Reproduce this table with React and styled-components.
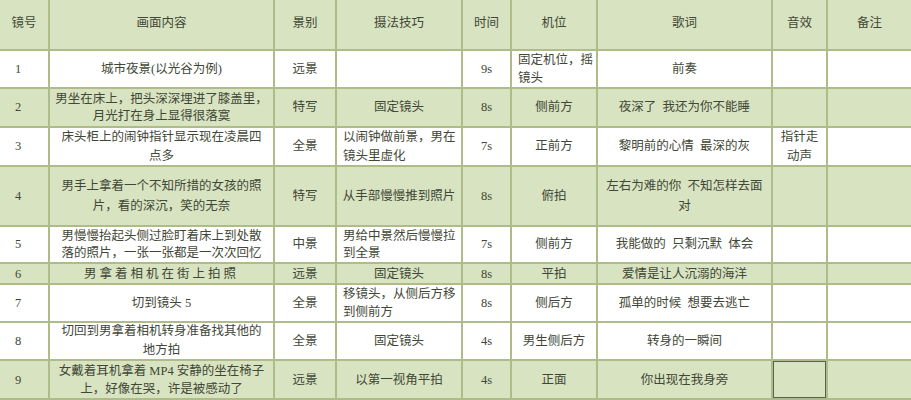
import styled, { createGlobalStyle } from "styled-components";

const GlobalStyle = createGlobalStyle`
  body {
    margin: 0;
    background: #fff;
    font-family: "Liberation Serif", "Noto Sans CJK SC", serif;
  }
`;

const line = "#afbc87";
const green = "#d8e3c1";

const Sheet = styled.div`
  display: grid;
  grid-template-columns: 50px 225px 62px 126px 49px 86px 175px 55px 1fr;
  grid-template-rows: 51px 38px 39px 39px 60px 37px 21px 38px 38px 39px;
  width: 911px;
  height: 400px;
  overflow: hidden;
  color: #414736;
`;

const Cell = styled.div`
  box-sizing: border-box;
  display: flex;
  align-items: center;
  justify-content: ${(p) => (p.$align === "left" ? "flex-start" : "center")};
  text-align: ${(p) => (p.$align === "left" ? "left" : "center")};
  padding: ${(p) => (p.$num ? "0 0 0 15px" : "0 6px")};
  background: ${(p) => (p.$shade ? green : "#fff")};
  border-right: 2px solid ${line};
  border-bottom: 2px solid ${line};
  font-size: 12.5px;
  line-height: ${(p) => p.$lh || 18}px;
  letter-spacing: ${(p) => p.$spread || 0}px;
  white-space: pre;
  overflow: hidden;
  box-shadow: ${(p) => (p.$boxed ? "inset 0 0 0 1px #5c5f52" : "none")};

  &:nth-child(9n) {
    border-right: none;
  }
`;

const HeadCell = styled(Cell)`
  background: ${green};
  padding-bottom: 4px;
`;

const headers = ["镜号", "画面内容", "景别", "摄法技巧", "时间", "机位", "歌词", "音效", "备注"];

const rows = [
  {
    lh: 18,
    cells: ["1", "城市夜景(以光谷为例)", "远景", "", "9s", { t: "固定机位，摇\n镜头", left: true }, "前奏", "", ""],
  },
  {
    shade: true,
    lh: 17,
    cells: ["2", "男坐在床上，把头深深埋进了膝盖里，\n月光打在身上显得很落寞", "特写", "固定镜头", "8s", "侧前方", "夜深了  我还为你不能睡", "", ""],
  },
  {
    lh: 19,
    cells: ["3", "床头柜上的闹钟指针显示现在凌晨四\n点多", "全景", { t: "以闹钟做前景，男在\n镜头里虚化", left: true }, "7s", "正前方", "黎明前的心情  最深的灰", "指针走\n动声", ""],
  },
  {
    shade: true,
    lh: 20,
    cells: ["4", "男手上拿着一个不知所措的女孩的照\n片，看的深沉，笑的无奈", "特写", "从手部慢慢推到照片", "8s", "俯拍", "左右为难的你  不知怎样去面\n对", "", ""],
  },
  {
    lh: 17,
    cells: ["5", "男慢慢抬起头侧过脸盯着床上到处散\n落的照片，一张一张都是一次次回忆", "中景", { t: "男给中景然后慢慢拉\n到全景", left: true }, "7s", "侧前方", "我能做的  只剩沉默  体会", "", ""],
  },
  {
    shade: true,
    lh: 18,
    cells: ["6", { t: "男拿着相机在街上拍照", spread: 3 }, "远景", "固定镜头", "8s", "平拍", "爱情是让人沉溺的海洋", "", ""],
  },
  {
    lh: 18,
    cells: ["7", "切到镜头 5", "全景", { t: "移镜头，从侧后方移\n到侧前方", left: true }, "8s", "侧后方", "孤单的时候  想要去逃亡", "", ""],
  },
  {
    lh: 19,
    cells: ["8", "切回到男拿着相机转身准备找其他的\n地方拍", "全景", "固定镜头", "4s", "男生侧后方", "转身的一瞬间", "", ""],
  },
  {
    shade: true,
    lh: 18,
    cells: ["9", "女戴着耳机拿着 MP4 安静的坐在椅子\n上，好像在哭，许是被感动了", "远景", "以第一视角平拍", "4s", "正面", "你出现在我身旁", { t: "", boxed: true }, ""],
  },
];

export default function App() {
  return (
    <>
      <GlobalStyle />
      <Sheet>
        {headers.map((h) => (
          <HeadCell key={h}>{h}</HeadCell>
        ))}
        {rows.map((row, r) =>
          row.cells.map((c, i) => {
            const cell = typeof c === "string" ? { t: c } : c;
            return (
              <Cell
                key={r + "-" + i}
                $shade={row.shade}
                $lh={row.lh}
                $num={i === 0}
                $align={i === 0 || cell.left ? "left" : "center"}
                $spread={cell.spread}
                $boxed={cell.boxed}
              >
                {cell.t}
              </Cell>
            );
          })
        )}
      </Sheet>
    </>
  );
}
